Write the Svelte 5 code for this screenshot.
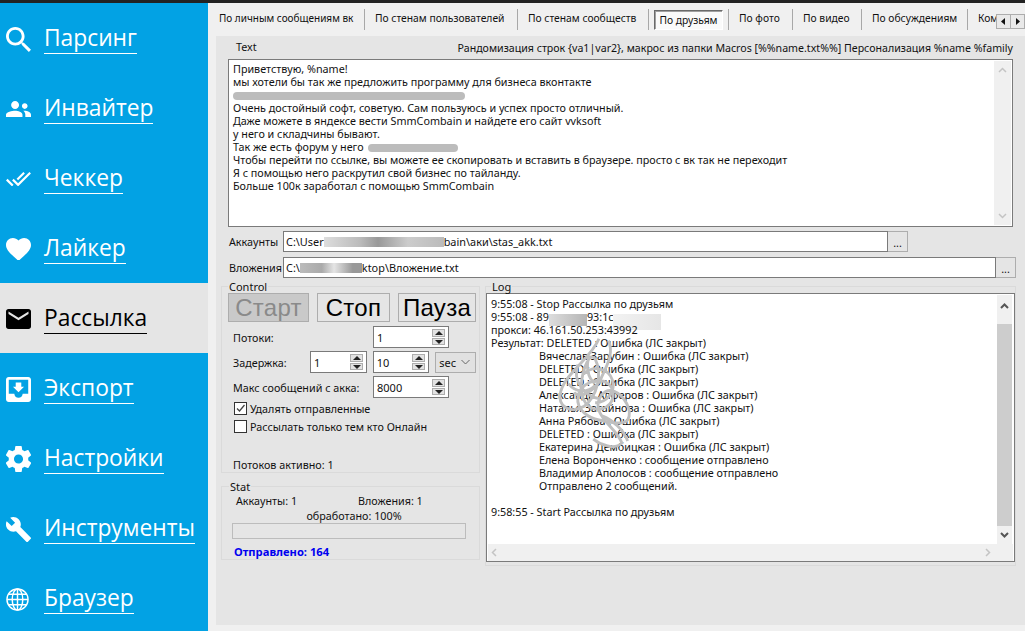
<script>
  const nav = [
    { label: 'Парсинг', box: '3 3 17.5 17.5', d: 'M15.5 14h-.79l-.28-.27C15.41 12.59 16 11.11 16 9.5 16 5.91 13.09 3 9.5 3S3 5.91 3 9.5 5.91 16 9.5 16c1.61 0 3.09-.59 4.23-1.57l.27.28v.79l5 4.99L20.49 19l-4.99-5zm-6 0C7.01 14 5 11.99 5 9.5S7.01 5 9.5 5 14 7.01 14 9.5 11.99 14 9.5 14z' },
    { label: 'Инвайтер', box: '1 5 22 14', d: 'M9 12c1.93 0 3.5-1.57 3.5-3.5S10.93 5 9 5 5.5 6.57 5.5 8.5 7.07 12 9 12zm8.500 0c1.38 0 2.500-1.120 2.500-2.500S18.880 7 17.500 7 15 8.120 15 9.500s1.120 2.500 2.500 2.500zM9 13.500c-2.500 0-8 1.300-8 3.500v2h14.500v-2c0-2.200-4-3.500-6.500-3.500zm8.500 0c-.4 0-.8.03-1.300.1 1.100.8 1.800 2 1.800 3.400v2h5v-2c0-2.200-3.500-3.500-5.500-3.500z' },
    { label: 'Чеккер', box: '.4 5.600 23.3 13.400', d: 'M18 7l-1.41-1.41-6.34 6.34 1.41 1.41L18 7zm4.240-1.410L11.660 16.170 7.480 12l-1.410 1.410L11.660 19l12-12-1.420-1.410zM.41 13.410L6 19l1.410-1.410L1.830 12 .41 13.410z' },
    { label: 'Лайкер', box: '2 3 20 18.350', d: 'M12 21.350l-1.450-1.320C5.400 15.360 2 12.280 2 8.500 2 5.420 4.420 3 7.500 3c1.740 0 3.410.81 4.500 2.090C13.090 3.810 14.760 3 16.500 3 19.580 3 22 5.420 22 8.500c0 3.780-3.400 6.860-8.550 11.540L12 21.350z' },
    { label: 'Рассылка', box: '2 4 20 16', d: 'M20 4H4c-1.100 0-1.990.9-1.990 2L2 18c0 1.100.9 2 2 2h16c1.100 0 2-.9 2-2V6c0-1.100-.9-2-2-2zm0 4l-8 5-8-5V6l8 5 8-5v2z', active: true },
    { label: 'Экспорт', box: '3 3 18 18', d: 'M19 3H4.990c-1.110 0-1.980.9-1.980 2L3 19c0 1.100.88 2 1.990 2H19c1.100 0 2-.9 2-2V5c0-1.100-.9-2-2-2zm0 12h-4c0 1.660-1.350 3-3 3s-3-1.340-3-3H4.990V5H19v10zm-3-5h-2V7h-4v3H8l4 4 4-4z' },
    { label: 'Настройки', box: '2.400 2 19.200 20', d: 'M19.430 12.980c.04-.32.07-.64.07-.98s-.03-.66-.07-.98l2.110-1.650c.19-.15.24-.42.12-.64l-2-3.460c-.12-.22-.39-.3-.61-.22l-2.490 1c-.52-.4-1.080-.73-1.690-.98l-.38-2.650C14.460 2.180 14.250 2 14 2h-4c-.25 0-.46.18-.49.42l-.38 2.650c-.61.25-1.170.59-1.690.98l-2.490-1c-.23-.09-.49 0-.61.22l-2 3.460c-.13.22-.07.49.12.64l2.110 1.650c-.04.32-.07.65-.07.98s.03.66.07.98l-2.110 1.650c-.19.15-.24.42-.12.64l2 3.460c.12.22.39.3.61.22l2.490-1c.52.4 1.080.73 1.690.98l.38 2.650c.03.24.24.42.49.42h4c.25 0 .46-.18.49-.42l.38-2.650c.61-.25 1.170-.59 1.690-.98l2.490 1c.23.09.49 0 .61-.22l2-3.460c.12-.22.07-.49-.12-.64l-2.110-1.650zM12 15.500c-1.930 0-3.500-1.570-3.500-3.500s1.570-3.500 3.500-3.500 3.500 1.570 3.500 3.500-1.570 3.500-3.500 3.500z' },
    { label: 'Инструменты', box: '1 1 22 22', d: 'M22.700 19l-9.100-9.100c.9-2.300.4-5-1.500-6.900-2-2-5-2.400-7.400-1.300L9 6 6 9 1.600 4.700C.4 7.100.9 10.100 2.900 12.100c1.900 1.900 4.600 2.400 6.900 1.500l9.100 9.100c.4.4 1 .4 1.400 0l2.300-2.300c.5-.4.5-1.100.1-1.400z' },
    { label: 'Браузер', globe: true }
  ];
  const tabs = [
    { t: 'По личным сообщениям вк', w: 157, small: true },
    { t: 'По стенам пользователей', w: 153 },
    { t: 'По стенам сообществ', w: 131 },
    { t: 'По друзьям', w: 80, sel: true },
    { t: 'По фото', w: 64 },
    { t: 'По видео', w: 69 },
    { t: 'По обсуждениям', w: 106 },
    { t: 'Комментариям', w: 28, last: true }
  ];
  const logTop = ['9:55:08 - Stop Рассылка по друзьям'];
  const logIndented = [
    'Вячеслав Зарубин : Ошибка (ЛС закрыт)',
    'DELETED : Ошибка (ЛС закрыт)',
    'DELETED : Ошибка (ЛС закрыт)',
    'Александр Алферов : Ошибка (ЛС закрыт)',
    'Наталья Загайнова : Ошибка (ЛС закрыт)',
    'Анна Рябова : Ошибка (ЛС закрыт)',
    'DELETED : Ошибка (ЛС закрыт)',
    'Екатерина Дембицкая : Ошибка (ЛС закрыт)',
    'Елена Воронченко : сообщение отправлено',
    'Владимир Аполосов : сообщение отправлено',
    'Отправлено 2 сообщений.'
  ];
</script>

<div class="screen">
  <nav class="side">
    {#each nav as n}
      <div class="nav" class:active={n.active}>
        <span class="ico">
          {#if n.globe}
            <svg class="globe" width="23" height="23" viewBox="0 0 24 24" fill="none" stroke="currentColor" stroke-width="1.500">
              <circle cx="12" cy="12" r="11" />
              <ellipse cx="12" cy="12" rx="5.500" ry="11" />
              <path d="M12 1v22M1 12h22M2.500 6.500h19M2.500 17.500h19" />
            </svg>
          {:else}
            <svg width="25" viewBox={n.box} fill="currentColor"><path d={n.d} /></svg>
          {/if}
        </span>
        <span class="lbl">{n.label}</span>
      </div>
    {/each}
  </nav>

  <main class="main">
    <div class="tabs">
      {#each tabs as tab}
        <div class="tab" class:last={tab.last} class:small={tab.small} style="width:{tab.w}px">
          {#if tab.sel}
            <span class="selbtn">{tab.t}</span>
          {:else}
            <span class="tabtext">{tab.t}</span>
          {/if}
        </div>
      {/each}
      <div class="arrows">
        <span class="arrow"><svg width="5" height="7" viewBox="0 0 5 7"><path d="M4 0v7L0 3.500z" /></svg></span>
        <span class="arrow"><svg width="5" height="7" viewBox="0 0 5 7"><path d="M1 0v7l4-3.500z" /></svg></span>
      </div>
    </div>

    <section class="panel">
      <div class="head">
        <span>Text</span>
        <span class="hint">Рандомизация строк {'{va1|var2}'}, макрос из папки Macros [%%name.txt%%] Персонализация %name %family</span>
      </div>

      <div class="textbox">
        <div class="textlines">
          <div>Приветствую, %name!</div>
          <div>мы хотели бы так же предложить программу для бизнеса вконтакте</div>
          <div><span class="pill p1"></span></div>
          <div>Очень достойный софт, советую. Сам пользуюсь и успех просто отличный.</div>
          <div>Даже можете в яндексе вести SmmCombain и найдете его сайт vvksoft</div>
          <div>у него и складчины бывают.</div>
          <div>Так же есть форум у него <span class="pill p2"></span></div>
          <div>Чтобы перейти по ссылке, вы можете ее скопировать и вставить в браузере. просто с вк так не переходит</div>
          <div>Я с помощью него раскрутил свой бизнес по тайланду.</div>
          <div>Больше 100к заработал с помощью SmmCombain</div>
        </div>
        <div class="vscroll light">
          <svg class="chev" width="9" height="6" viewBox="0 0 9 6"><path d="M1 5l3.500-3.500L8 5" /></svg>
          <svg class="chev" width="9" height="6" viewBox="0 0 9 6"><path d="M1 1l3.500 3.500L8 1" /></svg>
        </div>
      </div>

      <div class="filerow one">
        <span class="flabel">Аккаунты</span>
        <div class="path">C:\User<span class="smudge s1"></span>bain\аки\stas_akk.txt</div>
        <span class="dots">...</span>
      </div>
      <div class="filerow two">
        <span class="flabel">Вложения</span>
        <div class="path">C:\<span class="smudge s2"></span>ktop\Вложение.txt</div>
        <span class="dots">...</span>
      </div>

      <div class="lower">
        <div class="leftcol">
          <fieldset class="control">
            <legend>Control</legend>
            <div class="btns">
              <span class="bigbtn off">Старт</span>
              <span class="bigbtn stop">Стоп</span>
              <span class="bigbtn pause">Пауза</span>
            </div>
            <div class="frow r1">
              <span class="rlabel">Потоки:</span>
              <div class="spin wide"><span>1</span><i class="updown"><b class="up"></b><b class="down"></b></i></div>
            </div>
            <div class="frow r2">
              <span class="rlabel short">Задержка:</span>
              <div class="spin narrow"><span>1</span><i class="updown"><b class="up"></b><b class="down"></b></i></div>
              <div class="spin narrow"><span>10</span><i class="updown"><b class="up"></b><b class="down"></b></i></div>
              <div class="combo"><span>sec</span><svg width="9" height="6" viewBox="0 0 9 6"><path d="M.5 1l4 4 4-4" /></svg></div>
            </div>
            <div class="frow r3">
              <span class="rlabel">Макс сообщений с акка:</span>
              <div class="spin wide"><span>8000</span><i class="updown"><b class="up"></b><b class="down"></b></i></div>
            </div>
            <div class="check c1">
              <span class="box"><svg width="11" height="11" viewBox="0 0 11 11"><path d="M2 5.500l2.500 2.500L9.500 2" /></svg></span>
              <span>Удалять отправленные</span>
            </div>
            <div class="check c2">
              <span class="box"></span>
              <span>Рассылать только тем кто Онлайн</span>
            </div>
            <div class="active-count">Потоков активно: 1</div>
          </fieldset>

          <fieldset class="stat">
            <legend>Stat</legend>
            <div class="statrow">
              <span class="a">Аккаунты: 1</span>
              <span>Вложения: 1</span>
            </div>
            <div class="done">обработано: 100%</div>
            <div class="progress"></div>
            <div class="sent">Отправлено: 164</div>
          </fieldset>
        </div>

        <fieldset class="log">
          <legend>Log</legend>
          <div class="logbox">
            <div class="logmain">
              <div class="logtext">
                {#each logTop as l}<div>{l}</div>{/each}
                <div>9:55:08 - 89<span class="smudge s3"></span>93:1c<span class="smudge s4"></span></div>
                <div>прокси: 46.161.50.253:43992</div>
                <div>Результат: DELETED : Ошибка (ЛС закрыт)</div>
                {#each logIndented as l}<div class="ind">{l}</div>{/each}
                <div></div>
                <div>9:58:55 - Start Рассылка по друзьям</div>
                <svg class="scribble" width="86" height="128" viewBox="0 0 90 130" fill="none" stroke="#bfbfbf" stroke-width="3">
                  <path d="M46 3c-8 20-34 35-40 55-4 16 10 24 24 16 14-10 20-34 12-50-6-8-12 10-14 22-3 20 6 34 22 30 12-4 14-18 6-26-12-8-30 0-32 14-2 14 12 22 22 24 10 2 24 6 30 0 6-10-4-26-14-30-10-4-20 8-16 20 4 12 20 22 24 34-8 8-22 2-30-4M56 5c6 14-2 26-8 40-6 12-22 22-28 14M30 40c10-10 26-6 30 6 4 12-6 24-18 24M24 30c-6 16 6 34 24 36M14 50c8 10 20 10 28 2M36 20c-4 12-2 24 6 30M50 84c10 4 22 14 26 26" />
                </svg>
              </div>
              <div class="vscroll dark">
                <svg class="chev strong" width="9" height="6" viewBox="0 0 9 6"><path d="M1 5l3.500-3.500L8 5" /></svg>
                <div class="thumb"></div>
                <svg class="chev strong" width="9" height="6" viewBox="0 0 9 6"><path d="M1 1l3.500 3.500L8 1" /></svg>
              </div>
            </div>
            <div class="hscroll">
              <svg class="chev" width="6" height="9" viewBox="0 0 6 9"><path d="M5 1L1.500 4.500 5 8" /></svg>
              <svg class="chev" width="6" height="9" viewBox="0 0 6 9"><path d="M1 1l3.500 3.500L1 8" /></svg>
            </div>
          </div>
        </fieldset>
      </div>
    </section>
  </main>
</div>

<style>
  :global(body) { margin: 0; background: #f0f0f0; overflow: hidden; }
  .screen {
    width: 1025px; height: 631px; overflow: hidden; display: flex;
    border-top: 3px solid #222; box-sizing: border-box;
    font: 10.780px/13px "Noto Sans", "Open Sans", sans-serif; color: #111; background: #f0f0f0;
  }
  .side { width: 208px; flex: none; background: #02a2e4; }
  .nav { height: 70px; display: flex; align-items: center; color: #fff; padding-left: 6px; box-sizing: border-box; }
  .nav.active { background: #e5e5e5; color: #000; }
  .ico { width: 25px; margin-right: 13px; display: flex; align-items: center; padding-top: 2px; }
  .ico svg { display: block; }
  .lbl { font: 22.800px/30px "Open Sans", sans-serif; border-bottom: 1px solid currentColor; }

  .main { flex: 1; min-width: 0; }
  .tabs { height: 33px; display: flex; overflow: hidden; position: relative; font-size: 10.300px; }
  .tab { flex: none; box-sizing: border-box; height: 33px; display: flex; align-items: center; padding-left: 10px; white-space: nowrap; position: relative; }
  .tab:first-child { padding-left: 11px; }
  .tab.small { font-size: 10px; }
  .tab::after { content: ""; position: absolute; right: 0; top: 6px; height: 21px; border-right: 1px solid #a8a8a8; }
  .tab.last::after { display: none; }
  .tab.last { overflow: hidden; }
  .tabtext { display: block; margin-top: -2px; }
  .selbtn {
    margin-left: -5px; width: 69px; height: 20px; box-sizing: border-box; text-align: center; line-height: 19px;
    border: 1px solid; border-color: #6a6a6a #fff #fff #6a6a6a; background: #fafafa;
    box-shadow: inset 1px 1px 0 #a0a0a0;
  }
  .arrows { position: absolute; right: 0; top: 11px; display: flex; }
  .arrow { width: 14.500px; height: 15px; box-sizing: border-box; background: #e9e9e9; border: 1px solid #adadad; display: flex; align-items: center; justify-content: center; }
  .arrow + .arrow { border-left: 0; }
  .arrow svg { fill: #111; }

  .panel { margin-left: 8px; height: 589px; background: #e5e5e5; padding-left: 12px; box-sizing: border-box; }
  .head { height: 23px; display: flex; justify-content: space-between; padding: 4px 12px 0 8px; box-sizing: border-box; }
  .hint { font-size: 10.620px; margin-top: 2px; }
  .textbox { width: 785px; height: 168px; box-sizing: border-box; background: #fff; border: 1px solid #7a7a7a; display: flex; }
  .textlines { flex: 1; padding: 2px 4px 3px; }
  .textlines > div { height: 13px; }
  .vscroll { width: 17px; flex: none; margin: 1px; display: flex; flex-direction: column; align-items: center; justify-content: space-between; padding: 6px 0; box-sizing: border-box; background: #f0f0f0; }
  .chev { fill: none; stroke: #c4c4c4; stroke-width: 1.500; }
  .chev.strong { stroke: #555; stroke-width: 2; }
  .pill { display: inline-block; height: 8px; background: #bcbcbc; border-radius: 4px; vertical-align: -0.5px; filter: blur(.6px); }
  .p1 { width: 232px; }
  .p2 { width: 90px; margin-left: 2px; }

  .filerow { display: flex; align-items: stretch; height: 21px; }
  .filerow.one { margin-top: 4px; width: 680px; }
  .filerow.two { margin-top: 5px; width: 788px; }
  .flabel { width: 54px; padding-left: 1px; flex: none; line-height: 22px; }
  .path { flex: 1; background: #fff; border: 1px solid #7a7a7a; box-sizing: border-box; padding-left: 2px; line-height: 19px; font-size: 10.900px; white-space: nowrap; }
  .dots { width: 20px; flex: none; box-sizing: border-box; background: #e5e5e5; border: 1px solid #adadad; border-left: 0; text-align: center; line-height: 22px; }
  .smudge { display: inline-block; vertical-align: -1px; height: 10px; }
  .s1 { width: 120px; background: linear-gradient(90deg, #ddd, #bbb 30%, #999 45%, #ccc 70%, #bbb); }
  .s2 { width: 62px; background: linear-gradient(90deg, #bbb, #aaa 35%, #e5e5e5 55%, #999 85%); }
  .s3 { width: 38px; height: 12px; margin: -3px 0; background: linear-gradient(90deg, #ddd, #b5b5b5); vertical-align: -2px; }
  .s4 { width: 48px; height: 16px; margin: -5px 0; background: linear-gradient(90deg, #f2f2f2, #e6e6e6); vertical-align: -4px; }

  .lower { display: flex; margin: 2px 0 0 -7px; gap: 5px; }
  fieldset { margin: 0; padding: 0; min-width: 0; border: 1px solid #dadada; box-sizing: border-box; }
  legend { padding: 0 1px; margin-left: 6px; line-height: 13px; font-size: 11px; }
  .leftcol { width: 259px; flex: none; }
  .control { height: 193px; padding: 0 3px 0 6px; }
  .control legend { margin-left: 0; }
  .btns { display: flex; gap: 8px; }
  .bigbtn { height: 29px; box-sizing: border-box; border: 1px solid #adadad; background: #e5e5e5; text-align: center; font: 24px/28px "Liberation Sans", sans-serif; letter-spacing: .3px; color: #000; }
  .bigbtn.off { width: 81px; background: #c9c9c9; color: #8a8a8a; }
  .bigbtn.stop { width: 73px; }
  .bigbtn.pause { width: 78px; }
  .frow { display: flex; align-items: center; gap: 6px; height: 22px; padding-left: 5px; }
  .r1 { margin-top: 4px; }
  .r2, .r3 { margin-top: 3px; }
  .rlabel { width: 134px; flex: none; padding-top: 1px; }
  .rlabel.short { width: 71px; }
  .spin { height: 22px; box-sizing: border-box; background: #fff; border: 1px solid #7a7a7a; display: flex; align-items: center; justify-content: space-between; padding: 0 3px 0 3px; font-size: 11px; }
  .spin.wide { width: 76px; }
  .spin.narrow { width: 57px; }
  .updown { width: 13px; height: 16px; display: flex; flex-direction: column; gap: 1px; }
  .updown b { flex: 1; background: #e2e2e2; border: 1px solid #adadad; position: relative; }
  .updown b::after { content: ""; position: absolute; left: 2px; border-left: 4px solid transparent; border-right: 4px solid transparent; }
  .updown .up::after { top: 1px; border-bottom: 4px solid #222; }
  .updown .down::after { top: 1px; border-top: 4px solid #222; }
  .combo { width: 41px; height: 21px; box-sizing: border-box; border: 1px solid #adadad; background: #e1e1e1; display: flex; align-items: center; justify-content: space-between; padding: 0 5px 0 3px; font-size: 11px; }
  .combo svg { fill: none; stroke: #666; }
  .check { display: flex; align-items: center; gap: 3px; padding-left: 6px; height: 13px; }
  .c1 { margin-top: 4px; }
  .c2 { margin-top: 5px; }
  .box { width: 13px; height: 13px; box-sizing: border-box; background: #fff; border: 1px solid #333; display: block; }
  .box svg { display: block; fill: none; stroke: #444; stroke-width: 1.300; }
  .active-count { margin: 25px 0 0 5px; }
  .stat { height: 80px; margin-top: 7px; padding-left: 14px; }
  .stat legend { margin-left: -7px; }
  .statrow { display: flex; margin-top: 1px; }
  .statrow .a { width: 122px; }
  .done { text-align: center; margin: 2px 0 0 -7px; }
  .progress { width: 234px; height: 16px; box-sizing: border-box; border: 1px solid #bcbcbc; margin: 1px 0 0 -4px; }
  .sent { margin: 6px 0 0 -2px; color: #0000f0; font-weight: 700; font-size: 11.200px; }
  .log { height: 286px; padding: 0; width: 531px; flex: none; }
  .log legend { margin-left: 5px; }
  .logbox { height: 269px; box-sizing: border-box; background: #fff; border: 1px solid #7a7a7a; display: flex; flex-direction: column; }
  .logmain { flex: 1; display: flex; min-height: 0; }
  .logtext { flex: 1; padding: 3px 4px; position: relative; }
  .logtext > div { height: 13px; }
  .ind { padding-left: 48px; }
  .scribble { position: absolute; left: 68px; top: 40px; }
  .vscroll.dark { padding: 8px 0 6px; margin: 1px 2px 0 0; width: 15px; }
  .thumb { width: 15px; flex: 1; background: #cdcdcd; margin: 15px 0 6px; }
  .hscroll { height: 17px; flex: none; background: #f0f0f0; display: flex; justify-content: space-between; align-items: center; padding: 0 22px 0 3px; margin: 0 1px; }
</style>
